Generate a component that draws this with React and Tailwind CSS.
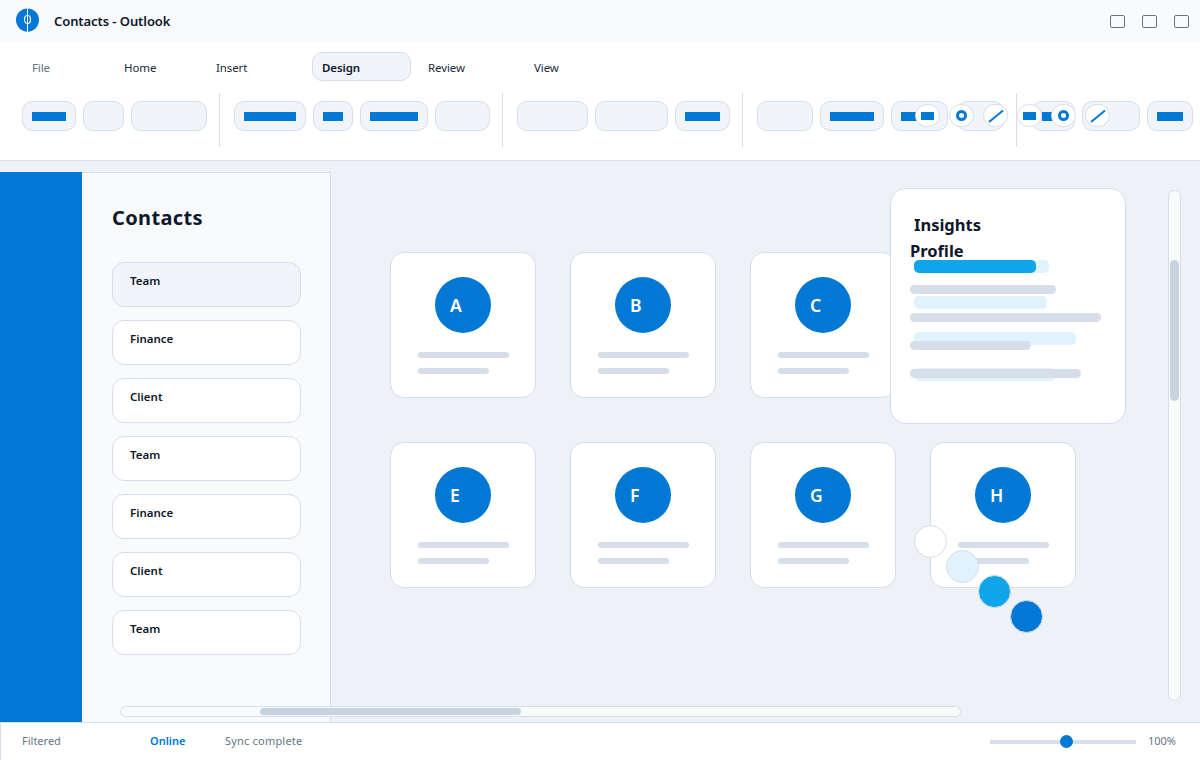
import React from 'react';

const BLUE = '#0078d4';

const tabs = [
    { label: 'File', width: 'w-[84px]', text: 'text-[#64748b] pl-[10px]' },
    { label: 'Home', width: 'w-[84px]', text: 'text-[#1e293b] pl-[10px]' },
    { label: 'Insert', width: 'w-[98px]', text: 'text-[#1e293b] pl-[10px]' },
    { label: 'Design', width: 'w-[99px]', text: 'text-[#0f172a] font-semibold border border-[#d6deea] bg-[#f1f4f9] pl-[9px]' },
    { label: 'Review', width: 'w-[97px]', text: 'text-[#1e293b] pl-[9px]' },
    { label: 'View', width: 'w-[84px]', text: 'text-[#1e293b] pl-[10px]' },
];

// widths read off the ribbon, bar = width of the blue block inside
const ribbonGroups = [
    [{ w: 54, bar: 34 }, { w: 41 }, { w: 76 }],
    [{ w: 72, bar: 52 }, { w: 40, bar: 20 }, { w: 68, bar: 48 }, { w: 55 }],
    [{ w: 71 }, { w: 73 }, { w: 55, bar: 35 }],
    [{ w: 56 }, { w: 64, bar: 44 }, { w: 57, bar: 37 }, { w: 47, ml: 2 }],
    [{ w: 43, bar: 23, ml: 1 }, { w: 58 }, { w: 46, bar: 26 }],
];

const people = ['Team', 'Finance', 'Client', 'Team', 'Finance', 'Client', 'Team'];
const cards = ['A', 'B', 'C', 'D', 'E', 'F', 'G', 'H'];

const RibbonButton = ({ w, bar, ml }) => (
    <div
        className="h-[30px] rounded-[10px] border border-[#d6deea] bg-[#f1f4f9] flex items-center pl-[9px] shrink-0"
        style={{ width: w, marginLeft: ml || 0 }}
    >
        {bar ? <div className="h-[9px] bg-[#0078d4]" style={{ width: bar }} /> : null}
    </div>
);

const MiniBar = () => <div className="w-[13px] h-[8px] bg-[#0078d4]" />;
const MiniRing = () => <div className="w-[11px] h-[11px] rounded-full border-[3px] border-[#0078d4]" />;
const MiniLine = () => (
    <svg width="16" height="14" viewBox="0 0 16 14">
        <path d="M1 13 L15 1.5" stroke={BLUE} strokeWidth="2" fill="none" />
    </svg>
);

const floatingTools = [
    { left: 'left-[915px]', icon: <MiniBar /> },
    { left: 'left-[949px]', icon: <MiniRing /> },
    { left: 'left-[983px]', icon: <MiniLine /> },
    { left: 'left-[1017px]', icon: <MiniBar /> },
    { left: 'left-[1051px]', icon: <MiniRing /> },
    { left: 'left-[1085px]', icon: <MiniLine /> },
];

const ContactCard = ({ letter }) => (
    <div className="w-[146px] h-[146px] rounded-[14px] border border-[#d6deea] bg-white pt-[24px] px-[27px]">
        <div className="w-[56px] h-[56px] ml-[17px] pt-[1px] rounded-full bg-[#0078d4] flex items-center pl-[15px] text-white text-[17.5px] font-semibold">
            {letter}
        </div>
        <div className="mt-[19px] h-[6px] w-[91px] rounded-full bg-[#d6deea]" />
        <div className="mt-[10px] h-[6px] w-[71px] rounded-full bg-[#d6deea]" />
    </div>
);

export default function App() {
    return (
        <div className="relative w-[1200px] h-[760px] overflow-hidden flex flex-col bg-[#eef1f6] font-['Noto_Sans',sans-serif]">
            {/* Title bar */}
            <div className="h-[42px] shrink-0 bg-[#f8fafc] flex items-center pl-[16px] pr-[11px]">
                <svg width="24" height="24" viewBox="0 0 24 24" className="shrink-0 -mt-[3px]">
                    <circle cx="11.5" cy="12" r="11.5" fill={BLUE} />
                    <ellipse cx="11.5" cy="11.5" rx="3" ry="4" fill="none" stroke="#fff" strokeWidth="1.2" />
                    <path d="M11.5 0 V24" stroke="#fff" strokeWidth="1" />
                </svg>
                <span className="ml-[14px] pt-[1px] text-[13px] tracking-[-0.08px] font-semibold text-[#0f172a]">Contacts - Outlook</span>
                <div className="ml-auto flex gap-[17px]">
                    <div className="w-[15px] h-[13px] rounded-[2px] border border-[#64748b]" />
                    <div className="w-[15px] h-[13px] rounded-[2px] border border-[#64748b]" />
                    <div className="w-[15px] h-[13px] rounded-[2px] border border-[#64748b]" />
                </div>
            </div>

            {/* Ribbon */}
            <div className="relative h-[119px] shrink-0 bg-white border-b border-[#d6deea] pt-[10px] pl-[22px]">
                <div className="flex gap-[8px] h-[29px]">
                    {tabs.map(tab => (
                        <div
                            key={tab.label}
                            className={`${tab.width} ${tab.text} h-[29px] rounded-[10px] pt-[2px] flex items-center text-[11.5px] tracking-[-0.1px]`}
                        >
                            {tab.label}
                        </div>
                    ))}
                </div>
                <div className="flex mt-[12px] h-[54px]">
                    {ribbonGroups.map((group, i) => (
                        <React.Fragment key={i}>
                            {i > 0 ? <div className="w-px h-[54px] bg-[#d6deea] ml-[12px] mr-[14px] shrink-0" /> : null}
                            <div className="flex gap-[7px] mt-[8px] h-[30px]">
                                {group.map((btn, j) => <RibbonButton key={j} {...btn} />)}
                            </div>
                        </React.Fragment>
                    ))}
                </div>
                {floatingTools.map(tool => (
                    <div
                        key={tool.left}
                        className={`absolute top-[62px] ${tool.left} w-[25px] h-[23px] rounded-full border border-[#d6deea] bg-white flex items-center justify-center`}
                    >
                        {tool.icon}
                    </div>
                ))}
            </div>

            {/* Main */}
            <div className="relative flex-1 flex min-h-0">
                <div className="w-[82px] mt-[11px] bg-[#0078d4] shrink-0" />
                <div className="w-[249px] mt-[11px] shrink-0 bg-[#f9fafc] border-t border-r border-[#d6deea] pl-[30px] pt-[31px]">
                    <h2 className="text-[20px] tracking-[0.35px] leading-[28px] font-bold text-[#0f172a]">Contacts</h2>
                    <div className="mt-[30px] flex flex-col gap-[13px]">
                        {people.map((name, i) => (
                            <div
                                key={i}
                                className={`w-[189px] h-[45px] rounded-[12px] border border-[#d6deea] pl-[17px] pt-[8px] text-[11.5px] leading-[20px] font-semibold text-[#0f172a] ${i === 0 ? 'bg-[#f1f4f9]' : 'bg-white'}`}
                            >
                                {name}
                            </div>
                        ))}
                    </div>
                </div>

                <div className="flex-1 pl-[59px] pt-[91px]">
                    <div className="grid grid-cols-[repeat(4,146px)] gap-x-[34px] gap-y-[44px]">
                        {cards.map(letter => <ContactCard key={letter} letter={letter} />)}
                    </div>
                </div>

                {/* Insights panel */}
                <div className="absolute left-[890px] top-[27px] w-[236px] h-[236px] rounded-[16px] border border-[#d6deea] bg-white">
                    <div className="absolute left-[23px] top-[71px] flex flex-col gap-[23px]">
                        <div className="w-[135px] h-[13px] rounded-[5px] bg-[#e0f2fe]">
                            <div className="w-[122px] h-[13px] rounded-[5px] bg-[#0ea5e9]" />
                        </div>
                        <div className="w-[133px] h-[13px] rounded-[5px] bg-[#e0f2fe]" />
                        <div className="w-[162px] h-[13px] rounded-[5px] bg-[#e0f2fe]" />
                        <div className="w-[142px] h-[13px] rounded-[5px] bg-[#e0f2fe]" />
                    </div>
                    <div className="relative pl-[19px] pt-[23px]">
                        <div className="pl-[4px] text-[16.5px] leading-[26px] font-bold text-[#0f172a]">Insights</div>
                        <div className="text-[16.5px] leading-[26px] font-bold text-[#0f172a]">Profile</div>
                        <div className="mt-[21px] flex flex-col gap-[19px]">
                            <div className="w-[146px] h-[9px] rounded-full bg-[#d6deea]" />
                            <div className="w-[191px] h-[9px] rounded-full bg-[#d6deea]" />
                            <div className="w-[121px] h-[9px] rounded-full bg-[#d6deea]" />
                            <div className="w-[171px] h-[9px] rounded-full bg-[#d6deea]" />
                        </div>
                    </div>
                </div>

                {/* Floating dots */}
                <div className="absolute left-[914px] top-[364px] w-[33px] h-[33px] rounded-full border border-[#d6deea] bg-white" />
                <div className="absolute left-[946px] top-[389px] w-[33px] h-[33px] rounded-full border border-[#d6deea] bg-[#e0f2fe]" />
                <div className="absolute left-[978px] top-[414px] w-[33px] h-[33px] rounded-full border border-[#d6deea] bg-[#0ea5e9]" />
                <div className="absolute left-[1010px] top-[439px] w-[33px] h-[33px] rounded-full border border-[#d6deea] bg-[#0078d4]" />

                {/* Scrollbars */}
                <div className="absolute left-[1168px] top-[29px] w-[13px] h-[511px] rounded-full border border-[#d6deea] bg-[#f9fafc] px-[1px] pt-[69px]">
                    <div className="w-[9px] h-[141px] rounded-full bg-[#c8d3e0]" />
                </div>
                <div className="absolute left-[120px] top-[545px] w-[841px] h-[11px] rounded-full border border-[#d6deea] bg-[#f9fafc] pl-[139px] pt-[1px]">
                    <div className="w-[261px] h-[7px] rounded-full bg-[#c8d3e0]" />
                </div>
            </div>

            {/* Status bar */}
            <div className="h-[38px] shrink-0 bg-white border-t border-l border-[#d6deea] flex items-center pl-[21px] pr-[24px] text-[11px]">
                <span className="w-[128px] text-[#64748b]">Filtered</span>
                <span className="w-[75px] font-semibold text-[#0078d4]">Online</span>
                <span className="tracking-[0.2px] text-[#64748b]">Sync complete</span>
                <div className="ml-auto relative w-[146px] h-[4px] mt-[1px] bg-[#d6deea]">
                    <div className="absolute left-[70px] top-[-5px] w-[13px] h-[13px] rounded-full bg-[#0078d4]" />
                </div>
                <span className="ml-[12px] text-[#64748b]">100%</span>
            </div>
        </div>
    );
}
